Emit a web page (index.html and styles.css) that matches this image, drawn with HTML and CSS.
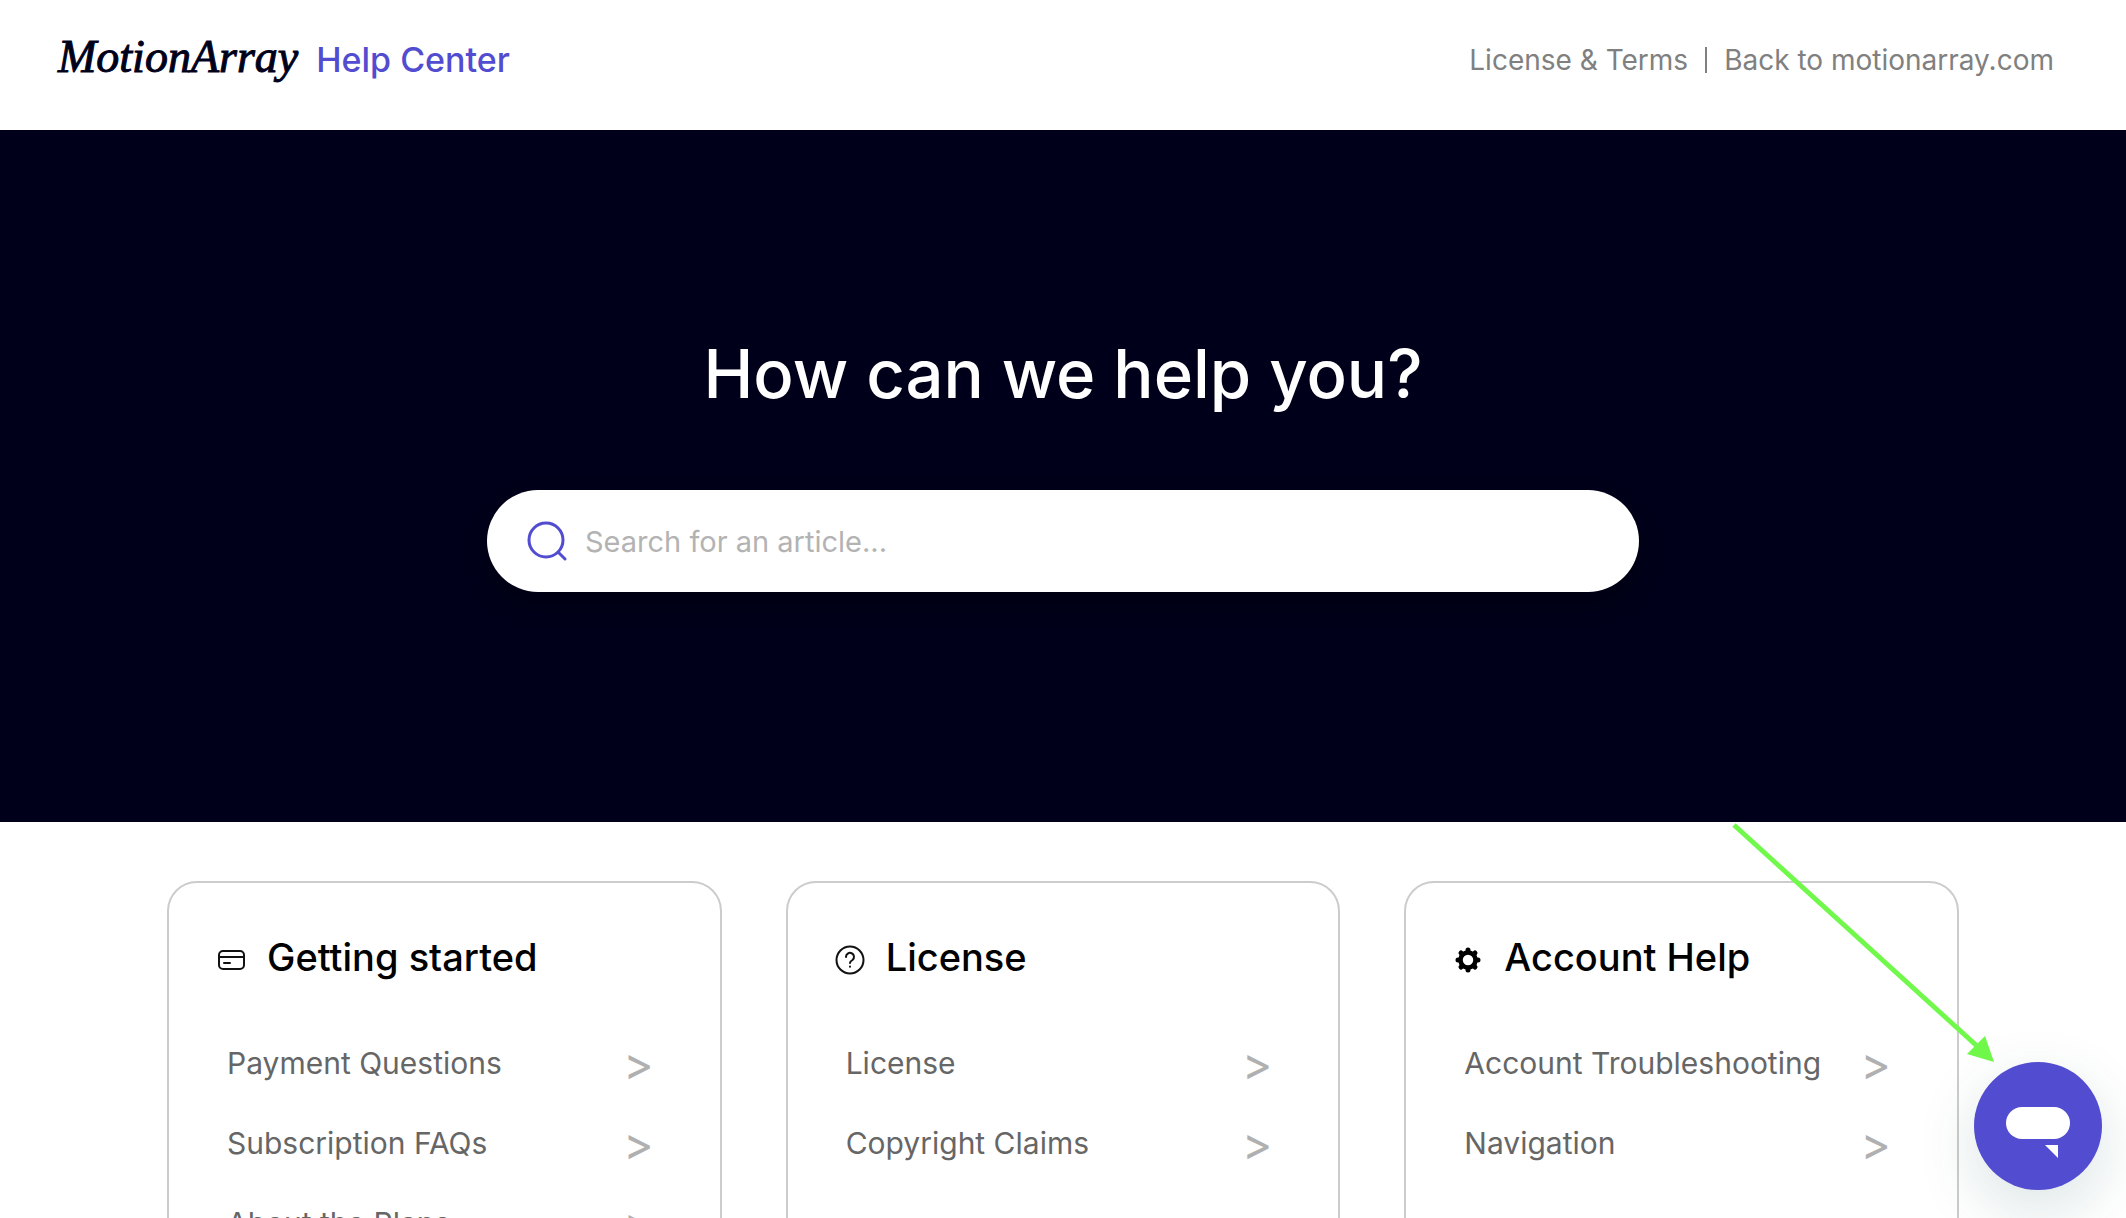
FILE: index.html
```html
<!DOCTYPE html>
<html lang="en">
<head>
  <meta charset="UTF-8" />
  <meta name="viewport" content="width=device-width, initial-scale=1" />
  <title>Motion Array Help Center</title>
  <link rel="stylesheet" href="styles.css">
</head>
<body>
  <header class="header">
    <a href="#" class="brand">
      <span class="brand-logo">MotionArray</span>
      <span class="brand-name">Help Center</span>
    </a>
    <nav class="header-nav">
      <a href="#">License &amp; Terms</a>
      <span class="divider"></span>
      <a href="#">Back to motionarray.com</a>
    </nav>
  </header>

  <section class="hero">
    <h1>How can we help you?</h1>
    <form class="search" role="search">
      <label for="query" class="search-label" aria-label="Search">
        <svg width="40" height="40" viewBox="0 0 40 40" fill="none" stroke="#524cd0" stroke-width="3" stroke-linecap="round">
          <circle cx="19" cy="19" r="17" />
          <path d="M32 32l6 6" />
        </svg>
      </label>
      <input type="search" id="query" class="search-input" placeholder="Search for an article...">
    </form>
  </section>

  <main class="cards">
    <section class="card">
      <h2 class="card-title">
        <svg width="32" height="32" viewBox="0 0 32 32" fill="none" stroke="#111" stroke-width="2" stroke-linecap="round">
          <rect x="4" y="7" width="25" height="18" rx="4" />
          <path d="M4 13h25M9 19h6" />
        </svg>
        Getting started
      </h2>
      <ul class="links">
        <li><a href="#">Payment Questions <span class="arrow">&gt;</span></a></li>
        <li><a href="#">Subscription FAQs <span class="arrow">&gt;</span></a></li>
        <li><a href="#">About the Plans <span class="arrow">&gt;</span></a></li>
      </ul>
    </section>

    <section class="card">
      <h2 class="card-title">
        <svg width="32" height="32" viewBox="0 0 32 32" fill="none" stroke="#111" stroke-width="2" stroke-linecap="round">
          <circle cx="16" cy="16" r="13.5" />
          <path d="M12 13a4 4 0 1 1 6.500 3c-1.500 1-2.500 1.500-2.500 3" />
          <path d="M16 22.500v.2" />
        </svg>
        License
      </h2>
      <ul class="links">
        <li><a href="#">License <span class="arrow">&gt;</span></a></li>
        <li><a href="#">Copyright Claims <span class="arrow">&gt;</span></a></li>
      </ul>
    </section>

    <section class="card">
      <h2 class="card-title">
        <svg width="32" height="32" viewBox="0 0 32 32">
          <circle cx="16" cy="16" r="7.500" fill="none" stroke="#000" stroke-width="4.500" />
          <path d="M16 6v1M16 25v1M6 16h1M25 16h1M9 9l.7.7M22.300 22.300l.7.7M9 23l.7-.7M22.300 9.700l.7-.7" stroke="#000" stroke-width="5" stroke-linecap="round" />
        </svg>
        Account Help
      </h2>
      <ul class="links">
        <li><a href="#">Account Troubleshooting <span class="arrow">&gt;</span></a></li>
        <li><a href="#">Navigation <span class="arrow">&gt;</span></a></li>
      </ul>
    </section>
  </main>

  <svg class="pointer" width="264" height="242" viewBox="0 0 264 242" aria-hidden="true">
    <path d="M3 3L246 224" stroke="#70f94a" stroke-width="5" />
    <path d="M263 240l-9-26-18 18z" fill="#70f94a" />
  </svg>

  <button class="chat" aria-label="Open chat">
    <svg width="64" height="54" viewBox="0 0 64 54" fill="#fff">
      <rect width="64" height="32" rx="16" />
      <path d="M39 38h13v13z" />
    </svg>
  </button>
</body>
</html>
```

FILE: styles.css
```css
* { box-sizing: border-box; }
body {
  margin: 0;
  font-family: Inter, "Liberation Sans", sans-serif;
  background: #fff;
  color: #000;
  height: 100vh;
  overflow: hidden;
}
a {
  color: inherit;
  text-decoration: none;
}
.header {
  display: flex;
  justify-content: space-between;
  align-items: flex-start;
  height: 130px;
  padding: 30px 72px 0 58px;
}
.brand {
  display: flex;
  align-items: baseline;
  gap: 18px;
  line-height: 54px;
}
.brand-logo {
  font-family: "Liberation Serif", serif;
  font-style: italic;
  font-size: 46px;
  color: #00001a;
  -webkit-text-stroke: 1px #00001a;
}
.brand-name {
  font-size: 34px;
  font-weight: 500;
  color: #524cd0;
}
.header-nav {
  display: flex;
  align-items: center;
  gap: 17px;
  font-size: 28px;
  line-height: 60px;
  color: #808080;
}
.divider {
  width: 2px;
  height: 26px;
  background: #808080;
}
.hero {
  display: flex;
  flex-direction: column;
  align-items: center;
  height: 692px;
  padding: 200px 40px 0;
  background: #00001a;
}
.hero h1 {
  margin: 0 0 72px;
  font-size: 67px;
  line-height: 88px;
  font-weight: 500;
  color: #fff;
}
.search {
  display: flex;
  align-items: center;
  gap: 18px;
  width: 100%;
  max-width: 1152px;
  height: 102px;
  padding: 0 40px;
  border-radius: 51px;
  background: #fff;
  box-shadow: 0 12px 24px rgba(0,0,0,0.3);
}
.search-label { display: flex; }
.search-input {
  flex: 1;
  border: none;
  outline: none;
  padding: 0;
  background: none;
  font-family: inherit;
  font-size: 29px;
}
.search-input::placeholder { color: #b3b3b3; }
.cards {
  display: grid;
  grid-template-columns: repeat(3, 1fr);
  gap: 64px;
  max-width: 1792px;
  margin: 59px auto 0;
}
.card {
  border: 2px solid #ccc;
  border-radius: 30px;
  padding: 44px 66px 48px 46px;
}
.card-title {
  display: flex;
  align-items: center;
  gap: 20px;
  margin: 0 0 36px;
  font-size: 38px;
  line-height: 60px;
  font-weight: 500;
}
.card-title svg { margin-top: 6px; }
.links {
  list-style: none;
  margin: 0;
  padding: 0 0 0 12px;
}
.links a {
  display: flex;
  justify-content: space-between;
  align-items: center;
  font-size: 30px;
  line-height: 80px;
  color: #666;
}
.arrow {
  font-size: 46px;
  color: #b0b0b0;
}
/* arrow pointing at the chat button */
.pointer {
  position: fixed;
  right: 131px;
  bottom: 154px;
}
.chat {
  position: fixed;
  right: 24px;
  bottom: 28px;
  display: flex;
  justify-content: center;
  align-items: center;
  width: 128px;
  height: 128px;
  padding: 16px 0 0;
  border: none;
  border-radius: 50%;
  background: #524cd0;
  box-shadow: 0 20px 60px rgba(23,73,77,0.15);
  cursor: pointer;
}
```
